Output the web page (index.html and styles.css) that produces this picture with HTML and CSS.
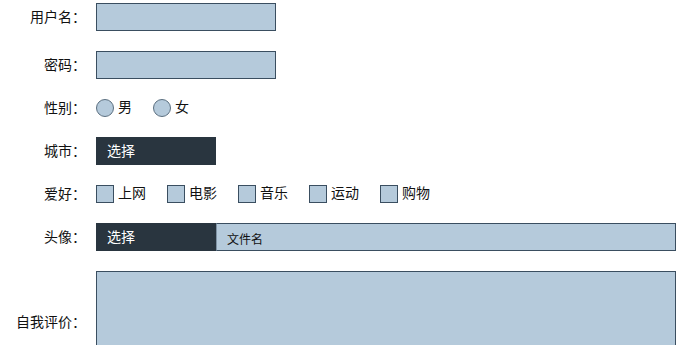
FILE: index.html
```html
<!DOCTYPE html>
<html lang="zh">
<head>
<meta charset="utf-8">
<title>表单</title>
<link rel="stylesheet" href="styles.css">
</head>
<body>
<form class="form">
  <div class="row">
    <label class="label">用户名：</label>
    <input class="text" type="text">
  </div>
  <div class="row">
    <label class="label">密码：</label>
    <input class="text" type="password">
  </div>
  <div class="row">
    <span class="label">性别：</span>
    <div class="options">
      <label class="opt"><input class="radio" type="radio" name="sex"><span class="opt-text">男</span></label>
      <label class="opt"><input class="radio" type="radio" name="sex"><span class="opt-text">女</span></label>
    </div>
  </div>
  <div class="row">
    <label class="label">城市：</label>
    <select class="select"><option>选择</option></select>
  </div>
  <div class="row">
    <span class="label">爱好：</span>
    <div class="options">
      <label class="opt"><input class="check" type="checkbox"><span class="opt-text">上网</span></label>
      <label class="opt"><input class="check" type="checkbox"><span class="opt-text">电影</span></label>
      <label class="opt"><input class="check" type="checkbox"><span class="opt-text">音乐</span></label>
      <label class="opt"><input class="check" type="checkbox"><span class="opt-text">运动</span></label>
      <label class="opt"><input class="check" type="checkbox"><span class="opt-text">购物</span></label>
    </div>
  </div>
  <div class="row">
    <span class="label">头像：</span>
    <div class="file">
      <span class="file-btn">选择</span>
      <span class="file-name">文件名</span>
    </div>
  </div>
  <div class="row">
    <label class="label">自我评价：</label>
    <textarea class="area"></textarea>
  </div>
</form>
</body>
</html>
```
FILE: styles.css
```css
html, body {
  margin: 0;
  padding: 0;
  background: #fff;
}
body {
  font-family: "Noto Sans CJK SC", "Liberation Sans", sans-serif;
  font-size: 14px;
  color: #111;
}
.form {
  display: flex;
  flex-direction: column;
  gap: 20px;
  padding-top: 3px;
}
.row {
  display: flex;
  align-items: center;
  gap: 10px;
}
.label {
  box-sizing: border-box;
  width: 86px;
  height: 18px;
  flex: none;
  text-align: right;
  line-height: 16px;
}
.text {
  box-sizing: border-box;
  width: 180px;
  height: 28px;
  margin: 0;
  background: #b5cadb;
  border: 1px solid #3a4e60;
  outline: none;
}
.options {
  display: flex;
  align-items: center;
  height: 18px;
}
.opt {
  display: flex;
  align-items: center;
  gap: 4px;
  height: 18px;
  margin-right: 21px;
}
.opt-text {
  box-sizing: border-box;
  height: 18px;
  line-height: 14px;
  padding-bottom: 4px;
}
.radio {
  appearance: none;
  -webkit-appearance: none;
  box-sizing: border-box;
  width: 18px;
  height: 18px;
  margin: 0;
  border-radius: 50%;
  background: #b5cadb;
  border: 1px solid #5b6f80;
}
.check {
  appearance: none;
  -webkit-appearance: none;
  box-sizing: border-box;
  width: 18px;
  height: 18px;
  margin: 0;
  background: #b5cadb;
  border: 1px solid #3a4e60;
}
.select {
  appearance: none;
  -webkit-appearance: none;
  box-sizing: border-box;
  width: 120px;
  height: 28px;
  margin: 0;
  padding: 0 0 2px 10px;
  background: #29353f;
  color: #fff;
  border: 1px solid #29353f;
  border-radius: 0;
  font-family: inherit;
  font-size: 14px;
  outline: none;
}
.file {
  display: flex;
  width: 580px;
  height: 28px;
}
.file-btn {
  box-sizing: border-box;
  width: 120px;
  flex: none;
  padding-left: 11px;
  background: #29353f;
  color: #fff;
  line-height: 26px;
}
.file-name {
  box-sizing: border-box;
  flex: 1;
  padding: 4px 0 0 10px;
  background: #b5cadb;
  border: 1px solid #3a4e60;
  border-left-color: #7f93a4;
  font-size: 12px;
  line-height: 22px;
  color: #111;
}
.area {
  box-sizing: border-box;
  width: 580px;
  height: 102px;
  margin: 0;
  background: #b5cadb;
  border: 1px solid #3a4e60;
  resize: none;
  outline: none;
}
```
